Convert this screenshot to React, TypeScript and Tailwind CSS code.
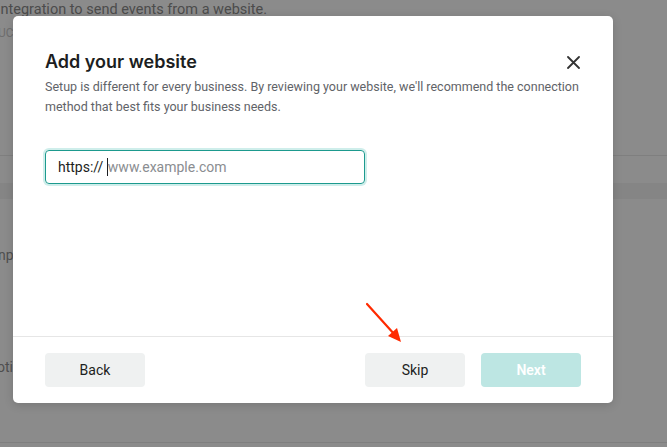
import React from "react";

export default function App() {
  return (
    <div
      className="relative w-[667px] h-[447px] overflow-hidden bg-[#8b8b8b]"
      style={{ fontFamily: "Roboto, 'Liberation Sans', sans-serif" }}
    >
      {/* underlying page (dimmed) */}
      <div className="flex flex-col w-full h-full">
        <div className="h-[20px] flex items-center -ml-[3px] text-[14.5px] text-[#4c4c4c] whitespace-nowrap">
          integration to send events from a website.
        </div>
        <div className="h-[26px] flex items-center -ml-[2px] text-[12px] text-[#6e6e6e] whitespace-nowrap">
          UCT
        </div>
        <div className="h-[109px]" />
        <div className="h-px bg-[#7f7f7f]" />
        <div className="h-[27px]" />
        <div className="h-[16px] bg-[#858585]" />
        <div className="h-[47px]" />
        <div className="h-[18px] flex items-center -ml-[2px] text-[14px] text-[#4f4f4f] whitespace-nowrap">
          np
        </div>
        <div className="h-[94px]" />
        <div className="h-[18px] flex items-center -ml-[3px] text-[14px] text-[#4f4f4f] whitespace-nowrap">
          otin
        </div>
        <div className="flex-1" />
        <div className="h-px bg-[#7f7f7f] mb-[4px]" />
      </div>

      {/* modal */}
      <div className="absolute left-[13px] top-[16px] w-[600px] h-[387px] bg-white rounded-[5px] shadow-[0_2px_10px_rgba(0,0,0,0.15)] flex flex-col">
        <div className="px-8 pt-[34px] relative">
          <div className="flex items-center justify-between">
            <h2
              className="text-[18px] leading-[24px] font-semibold text-[#1c1e21]"
              style={{ fontFamily: "Inter, Roboto, sans-serif" }}
            >
              Add your website
            </h2>
            <button className="w-[24px] h-[24px] flex items-center justify-center -mr-[4px] text-[#333]">
              <svg width="13" height="13" viewBox="0 0 13 13" fill="none">
                <path d="M1 1L12 12M12 1L1 12" stroke="#333" strokeWidth="1.8" strokeLinecap="round" />
              </svg>
            </button>
          </div>
          <p className="mt-[3px] text-[12.5px] leading-[20px] text-[#5f6368]">
            Setup is different for every business. By reviewing your website, we'll recommend the connection method that best fits your business needs.
          </p>
          <div className="mt-[33px] w-[320px] h-[34px] rounded-[4px] border border-[#1d9a8e] shadow-[0_0_0_2px_#cfeeeb] flex items-center px-[12px] text-[14px]">
            <span className="text-[#1c1e21] whitespace-pre">https:// </span>
            <span className="w-px h-[18px] bg-[#1c1e21]" />
            <span className="text-[#8a8d91]">www.example.com</span>
          </div>
        </div>
        <div className="flex-1" />
        <div className="h-px bg-[#e6e6e6]" />
        <div className="flex items-center px-8 pt-[16px] pb-[16px]">
          <button className="w-[100px] h-[34px] rounded-[4px] bg-[#eff1f1] text-[14px] text-[#1c1e21]">
            Back
          </button>
          <div className="flex-1" />
          <button className="w-[100px] h-[34px] rounded-[4px] bg-[#eff1f1] text-[14px] text-[#1c1e21]">
            Skip
          </button>
          <button className="ml-[16px] w-[100px] h-[34px] rounded-[4px] bg-[#bde6e3] text-[14px] font-semibold text-white">
            Next
          </button>
        </div>
      </div>

      {/* annotation arrow */}
      <svg className="absolute left-0 top-0 pointer-events-none" width="667" height="447">
        <line x1="367" y1="304" x2="395" y2="335" stroke="#ff2a00" strokeWidth="2.2" strokeLinecap="round" />
        <polygon points="401,342 388,336 397,328" fill="#ff2a00" />
      </svg>
    </div>
  );
}
